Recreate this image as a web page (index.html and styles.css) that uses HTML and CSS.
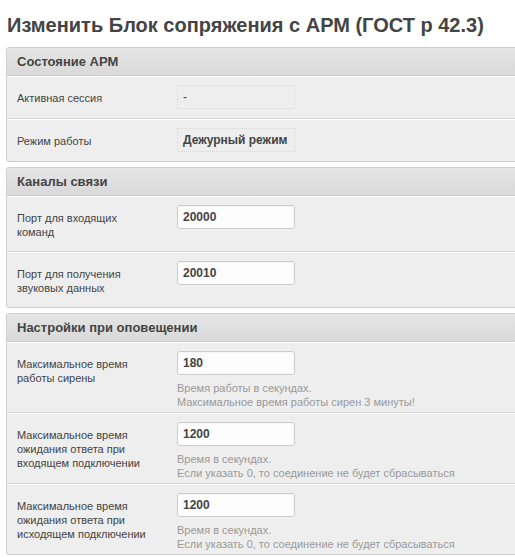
FILE: index.html
```html
<!DOCTYPE html>
<html lang="ru">
<head>
<meta charset="utf-8">
<title>Изменить Блок сопряжения с АРМ</title>
<link rel="stylesheet" href="styles.css">
</head>
<body>
<div class="page">
  <h1 class="page-title">Изменить Блок сопряжения с АРМ (ГОСТ р 42.3)</h1>

  <section class="module">
    <h2 class="module-title">Состояние АРМ</h2>
    <div class="form-row">
      <div class="row-label">Активная сессия</div>
      <div class="row-field"><div class="readonly readonly-plain">-</div></div>
    </div>
    <div class="form-row">
      <div class="row-label">Режим работы</div>
      <div class="row-field"><div class="readonly">Дежурный режим</div></div>
    </div>
  </section>

  <section class="module">
    <h2 class="module-title">Каналы связи</h2>
    <div class="form-row">
      <div class="row-label">Порт для входящих команд</div>
      <div class="row-field"><input class="text-input" type="text" value="20000"></div>
    </div>
    <div class="form-row">
      <div class="row-label">Порт для получения звуковых данных</div>
      <div class="row-field"><input class="text-input" type="text" value="20010"></div>
    </div>
  </section>

  <section class="module">
    <h2 class="module-title">Настройки при оповещении</h2>
    <div class="form-row">
      <div class="row-label">Максимальное время работы сирены</div>
      <div class="row-field">
        <input class="text-input" type="text" value="180">
        <p class="help">Время работы в секундах.<br>Максимальное время работы сирен 3 минуты!</p>
      </div>
    </div>
    <div class="form-row">
      <div class="row-label">Максимальное время ожидания ответа при входящем подключении</div>
      <div class="row-field">
        <input class="text-input" type="text" value="1200">
        <p class="help">Время в секундах.<br>Если указать 0, то соединение не будет сбрасываться</p>
      </div>
    </div>
    <div class="form-row">
      <div class="row-label">Максимальное время ожидания ответа при исходящем подключении</div>
      <div class="row-field">
        <input class="text-input" type="text" value="1200">
        <p class="help">Время в секундах.<br>Если указать 0, то соединение не будет сбрасываться</p>
      </div>
    </div>
  </section>
</div>
</body>
</html>
```

FILE: styles.css
```css
html, body {
  margin: 0;
  padding: 0;
  background: #fff;
  overflow: hidden;
}

body {
  font-family: "Liberation Sans", Arial, sans-serif;
  color: #444;
}

.page {
  padding: 0 0 0 6px;
  margin-right: -30px;
}

.page-title {
  margin: 12px 0 9px 1px;
  font-size: 20px;
  line-height: 26px;
  font-weight: bold;
  color: #444;
}

.module {
  border: 1px solid #cfcfcf;
  border-radius: 3px;
  background: #eee;
  margin: 0 0 5px 0;
  overflow: hidden;
}

.module-title {
  margin: 0;
  padding: 5px 10px;
  font-size: 13px;
  line-height: 17px;
  font-weight: bold;
  color: #444;
  background: linear-gradient(to bottom, #e5e5e5, #d9d9d9);
  border-bottom: 1px solid #cfcfcf;
}

.form-row {
  display: flex;
  align-items: flex-start;
  padding: 8px 10px 3px 10px;
  border-top: 1px solid #fff;
  border-bottom: 1px solid #d6d6d6;
}

.form-row:last-child {
  border-bottom: 0;
}

.row-label {
  flex: 0 0 134px;
  padding: 6px 26px 9px 0;
  font-size: 11px;
  line-height: 14px;
  color: #444;
}

.row-field {
  flex: 1 1 auto;
  padding-bottom: 6px;
}

.readonly {
  box-sizing: border-box;
  width: 118px;
  height: 24px;
  padding: 0 5px;
  border: 1px dotted #d8d8d8;
  font-size: 12px;
  line-height: 22px;
  font-weight: bold;
  color: #444;
}

.readonly-plain {
  font-weight: normal;
}

.text-input {
  display: block;
  box-sizing: border-box;
  width: 118px;
  height: 24px;
  margin: 0;
  padding: 0 5px;
  border: 1px solid #cdcdcd;
  border-radius: 3px;
  background: #fdfdfd;
  font-family: "Liberation Sans", Arial, sans-serif;
  font-size: 12px;
  font-weight: bold;
  color: #444;
  box-shadow: inset 0 1px 2px rgba(0,0,0,0.04);
}

.help {
  margin: 6px 0 -6px 0;
  font-size: 11px;
  line-height: 14px;
  color: #999;
}
```
